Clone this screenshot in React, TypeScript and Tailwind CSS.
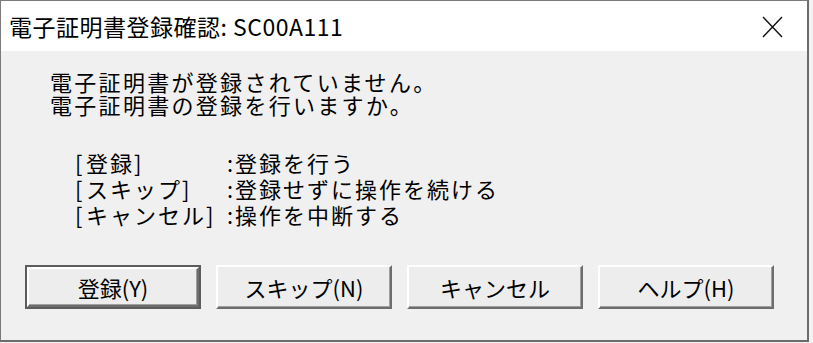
import React from "react";

const jp = { fontFamily: '"Noto Sans CJK JP", "Noto Sans", sans-serif' };

function Btn({ label, def }: { label: string; def?: boolean }) {
  const inner = (
    <div className="flex-1 flex items-center justify-center bg-[#ededed] border-2 border-t-white border-l-white border-r-[#6d6d6d] border-b-[#6d6d6d] shadow-[inset_-1px_-1px_0_#a0a0a0] text-[22px] text-black leading-none">
      {label}
    </div>
  );
  return (
    <div
      className={
        "w-[176px] h-[44px] flex " + (def ? "border-2 border-[#5c5c5c]" : "")
      }
    >
      {inner}
    </div>
  );
}

function Label({ text }: { text: string }) {
  return (
    <div className="whitespace-nowrap">
      <span className="inline-block w-[11px]">[</span>
      {text}
      <span className="inline-block w-[12px]">]</span>
    </div>
  );
}

export default function App() {
  return (
    <div className="w-[813px] h-[343px] bg-[#f2f2f2] flex items-start" style={jp}>
      <div className="w-[809px] h-[342px] flex flex-col border-l border-t border-[#7a7a7a] border-r-2 border-b-2 border-r-[#6b6b6b] border-b-[#6b6b6b]">
        <div className="h-[50px] bg-white flex items-center justify-between pl-[8px] pr-[24px] shrink-0">
          <span className="text-[23px] text-black leading-none tracking-[0.5px]">
            電子証明書登録確認: SC00A111
          </span>
          <svg width="21" height="22" viewBox="0 0 21 22" className="mt-[2px]">
            <path d="M1 1 L20 21 M20 1 L1 21" stroke="#111" strokeWidth="1.4" fill="none" />
          </svg>
        </div>
        <div className="flex-1 bg-[#f0f0f0] flex flex-col">
          <div className="pl-[49px] pt-[19px] text-[22px] leading-[23px] tracking-[2.3px] text-black">
            <div>電子証明書が登録されていません。</div>
            <div>電子証明書の登録を行いますか。</div>
          </div>
          <div className="pl-[74px] pt-[33px] text-[22px] leading-[26px] tracking-[2px] text-black grid grid-cols-[152px_1fr]">
            <Label text="登録" />
            <div>:登録を行う</div>
            <Label text="スキップ" />
            <div>:登録せずに操作を続ける</div>
            <Label text="キャンセル" />
            <div>:操作を中断する</div>
          </div>
          <div className="pl-[24px] pt-[38px] flex gap-[15px]">
            <Btn label="登録(Y)" def />
            <Btn label="スキップ(N)" />
            <Btn label="キャンセル" />
            <Btn label="ヘルプ(H)" />
          </div>
        </div>
      </div>
    </div>
  );
}
